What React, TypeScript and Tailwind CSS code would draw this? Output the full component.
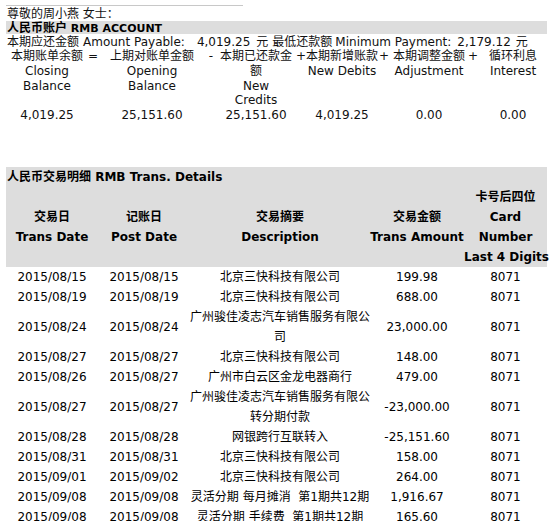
import React from "react";

const FONT = "font-['DejaVu_Sans','Noto_Sans_CJK_SC',sans-serif]";

type Row = { td: string; pd: string; desc: string[]; amt: string };

const rows: Row[] = [
  { td: "2015/08/15", pd: "2015/08/15", desc: ["北京三快科技有限公司"], amt: "199.98" },
  { td: "2015/08/19", pd: "2015/08/19", desc: ["北京三快科技有限公司"], amt: "688.00" },
  { td: "2015/08/24", pd: "2015/08/24", desc: ["广州骏佳凌志汽车销售服务有限公", "司"], amt: "23,000.00" },
  { td: "2015/08/27", pd: "2015/08/27", desc: ["北京三快科技有限公司"], amt: "148.00" },
  { td: "2015/08/26", pd: "2015/08/27", desc: ["广州市白云区金龙电器商行"], amt: "479.00" },
  { td: "2015/08/27", pd: "2015/08/27", desc: ["广州骏佳凌志汽车销售服务有限公", "转分期付款"], amt: "-23,000.00" },
  { td: "2015/08/28", pd: "2015/08/28", desc: ["网银跨行互联转入"], amt: "-25,151.60" },
  { td: "2015/08/31", pd: "2015/08/31", desc: ["北京三快科技有限公司"], amt: "158.00" },
  { td: "2015/09/01", pd: "2015/09/02", desc: ["北京三快科技有限公司"], amt: "264.00" },
  { td: "2015/09/08", pd: "2015/09/08", desc: ["灵活分期 每月摊消\u00a0 第1期共12期"], amt: "1,916.67" },
  { td: "2015/09/08", pd: "2015/09/08", desc: ["灵活分期 手续费\u00a0 第1期共12期"], amt: "165.60" },
];

export default function App() {
  return (
    <div className={`${FONT} h-[521px] w-[552px] overflow-hidden bg-white text-black`}>
      <div className="pl-[6px] pt-[5px]">
        <div className="h-px w-[237px] bg-[#c8c8c8]" />
        <div className="h-[14px] pl-px text-[12px] leading-[17px] text-[#111]">尊敬的周小燕 女士：</div>
        <div className="mt-px h-[13px] w-[541px] whitespace-nowrap bg-[#dddddd] pl-px text-[11px] font-bold leading-[14px]">
          <span className="text-[12px]">人民币账户</span> RMB ACCOUNT
        </div>
        <div className="flex h-[15px] items-baseline whitespace-nowrap pl-px pt-px text-[12px] leading-[15px] text-[#111]">
          <span>本期应还金额</span>
          <span className="ml-[4px]">Amount Payable:</span>
          <span className="ml-[12px]">4,019.25</span>
          <span className="ml-[6px]">元</span>
          <span className="ml-[4px]">最低还款额</span>
          <span className="ml-[3px]">Minimum Payment:</span>
          <span className="ml-[6px]">2,179.12</span>
          <span className="ml-[5px]">元</span>
        </div>
        <div className="grid grid-cols-[82px_10px_108px_10px_80px_10px_72px_12px_78px_10px_70px] whitespace-nowrap text-center text-[12px] leading-[14.75px] text-[#111]">
          <div>
            本期账单余额
            <br />Closing
            <br />Balance
          </div>
          <div>=</div>
          <div>
            上期对账单金额
            <br />Opening
            <br />Balance
          </div>
          <div>-</div>
          <div>
            本期已还款金
            <br />额
            <br />New
            <br />Credits
          </div>
          <div>+</div>
          <div>
            本期新增账款
            <br />New Debits
          </div>
          <div>+</div>
          <div>
            本期调整金额
            <br />Adjustment
          </div>
          <div>+</div>
          <div>
            循环利息
            <br />Interest
          </div>
          <div>4,019.25</div>
          <div />
          <div>25,151.60</div>
          <div />
          <div>25,151.60</div>
          <div />
          <div>4,019.25</div>
          <div />
          <div>0.00</div>
          <div />
          <div>0.00</div>
        </div>

        <div className="mt-[44px] w-[541px]">
          <div className="bg-[#dddddd]">
            <div className="h-[20px] whitespace-nowrap pl-px text-[12px] font-bold leading-[20px]">
              人民币交易明细 RMB Trans. Details
            </div>
            <div className="grid h-[80px] grid-cols-[92px_92px_180px_94px_83px] items-center whitespace-nowrap text-center text-[12px] font-bold leading-[20px]">
              <div>
                交易日
                <br />Trans Date
              </div>
              <div>
                记账日
                <br />Post Date
              </div>
              <div>
                交易摘要
                <br />Description
              </div>
              <div>
                交易金额
                <br />Trans Amount
              </div>
              <div>
                卡号后四位
                <br />Card
                <br />Number
                <br />Last 4 Digits
              </div>
            </div>
          </div>
          {rows.map((r, i) => (
            <div
              key={i}
              className="grid grid-cols-[92px_92px_180px_94px_83px] items-center whitespace-nowrap text-center text-[12px] leading-[20px]"
            >
              <div>{r.td}</div>
              <div>{r.pd}</div>
              <div>
                {r.desc.map((d, j) => (
                  <div key={j}>{d}</div>
                ))}
              </div>
              <div>{r.amt}</div>
              <div>8071</div>
            </div>
          ))}
        </div>
      </div>
    </div>
  );
}
